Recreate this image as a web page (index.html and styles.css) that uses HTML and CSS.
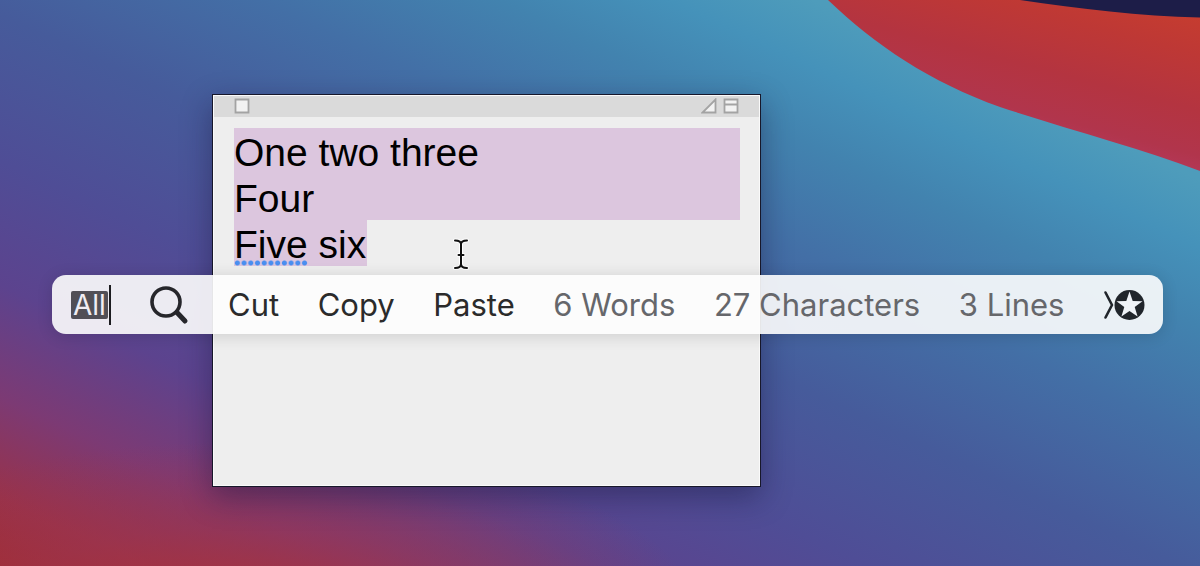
FILE: index.html
```html
<!DOCTYPE html>
<html lang="en">

<head>
    <meta charset="UTF-8">
    <meta name="viewport" content="width=device-width, initial-scale=1.0">
    <title>Note</title>

    <link rel="stylesheet" href="styles.css">
</head>

<body>
    <main class="desktop">
        <svg class="wallpaper" viewBox="0 0 1200 566" preserveAspectRatio="xMaxYMin slice" aria-hidden="true">
            <defs>
                <linearGradient id="wave" gradientUnits="userSpaceOnUse" x1="1130" y1="0" x2="1085" y2="172">
                    <stop offset="0" stop-color="#c53c30" />
                    <stop offset="0.2" stop-color="#be3835" />
                    <stop offset="0.5" stop-color="#b43440" />
                    <stop offset="0.75" stop-color="#b1354c" />
                    <stop offset="1" stop-color="#b83c68" />
                </linearGradient>
            </defs>
            <path fill="url(#wave)" d="M828 0C875 45 930 82 1000 107C1070 130 1140 148 1200 171V0Z" />
            <path fill="#1d1d48" d="M1020 0C1080 9 1140 16 1200 17.500V0Z" />
        </svg>

        <section class="note" aria-label="Sticky note">
            <header class="titlebar">
                <button class="titlebar-btn" aria-label="Close">
                    <svg width="16" height="16" viewBox="0 0 16 16"><path d="M1.500 1.500h13v13h-13z" /></svg>
                </button>
                <div class="titlebar-group">
                    <button class="titlebar-btn" aria-label="Zoom">
                        <svg width="16" height="16" viewBox="0 0 16 16"><path d="M14.500 1.500v13h-13z" /></svg>
                    </button>
                    <button class="titlebar-btn" aria-label="Collapse">
                        <svg width="16" height="16" viewBox="0 0 16 16"><path d="M1.500 1.500h13v13h-13zM1.500 6.500h13" /></svg>
                    </button>
                </div>
            </header>
            <div class="note-text" role="textbox" aria-multiline="true" aria-label="Note text" contenteditable="true" spellcheck="false">
                <div class="selected">One two three</div>
                <div class="selected">Four</div>
                <div class="selected last"><span class="misspelled">Five</span> six</div>
            </div>
        </section>

        <!-- I-beam pointer -->
        <svg class="pointer" width="18" height="34" viewBox="0 0 18 34" aria-hidden="true">
            <path class="pointer-halo" d="M3 3.500C6 3.500 9 4 9 7V27C9 30 6 31 3 31M15 3.500C12 3.500 9 4 9 7M9 27C9 30 12 31 15 31M6.500 18H11.500" />
            <path class="pointer-line" d="M3 3.500C6 3.500 9 4 9 7V27C9 30 6 31 3 31M15 3.500C12 3.500 9 4 9 7M9 27C9 30 12 31 15 31M6.500 18H11.500" />
        </svg>

        <div class="toolbar" role="toolbar" aria-label="Text actions">
            <button class="action select-all"><span class="select-all-text">All</span></button>
            <button class="action" aria-label="Search">
                <svg width="40" height="40" viewBox="0 0 40 40" fill="none" stroke="#26262b" stroke-linecap="round">
                    <circle cx="17" cy="17" r="14" stroke-width="3.600" />
                    <path d="M28 27.500L36 36" stroke-width="5" />
                </svg>
            </button>
            <button class="action">Cut</button>
            <button class="action">Copy</button>
            <button class="action">Paste</button>
            <button class="action count">6 Words</button>
            <button class="action count">27 Characters</button>
            <button class="action count">3 Lines</button>
            <button class="action" aria-label="More">
                <svg width="42" height="32" viewBox="0 0 42 32">
                    <path d="M2.500 3.500L9 16L2.500 28.500" fill="none" stroke="#20252b" stroke-width="2.600" stroke-linecap="round" stroke-linejoin="round" />
                    <circle cx="26.500" cy="16" r="15" fill="#20252b" />
                    <path fill="#eef2f7" d="M26.500 2.500L29.700 12L39.500 12.200L31.700 18.100L34.600 27.500L26.500 21.900L18.400 27.500L21.300 18.100L13.500 12.200L23.300 12Z" />
                </svg>
            </button>
        </div>
    </main>
</body>

</html>
```
FILE: styles.css
```css
body {
    margin: 0;
    font-family: "Inter", "Liberation Sans", sans-serif;
}

button {
    padding: 0;
    border: none;
    background: none;
    color: inherit;
    font: inherit;
    cursor: pointer;
}

svg {
    display: block;
}

/* Red glow in the corner over the diagonal blue to purple sweep */
.desktop {
    position: relative;
    min-height: 100vh;
    overflow: hidden;
    background:
        radial-gradient(ellipse 38% 30% at 20% 108%, rgba(168, 50, 60, 0.95), rgba(160, 52, 75, 0.5) 50%, rgba(150, 55, 100, 0) 100%),
        linear-gradient(25deg,
            #9f2c32 0%,
            #98324a 6%,
            #7c3a74 15%,
            #5c438e 25%,
            #4f4d96 36%,
            #465b9b 49%,
            #436fa6 61%,
            #4283af 71%,
            #4592ba 78%,
            #4e9cbb 84%);
}

.wallpaper {
    position: absolute;
    inset: 0;
    width: 100%;
    height: 100%;
}

/* Note window */
.note {
    position: absolute;
    top: 94px;
    left: 212px;
    width: 549px;
    height: 393px;
    box-sizing: border-box;
    border: 1px solid #17172a;
    background-color: #eeeeee;
    box-shadow: inset 0 0 0 1px #fafafa, 0 10px 28px rgba(20, 15, 50, 0.4);
}

.titlebar {
    display: flex;
    align-items: flex-start;
    justify-content: space-between;
    height: 21px;
    box-sizing: border-box;
    margin: 1px 1px 0;
    padding: 2px 20px 0;
    background-color: #dadada;
}

.titlebar-group {
    display: flex;
    gap: 6px;
}

.titlebar-btn path {
    fill: #f2f2f2;
    stroke: #a3a3a3;
    stroke-width: 1.8;
}

.note-text {
    padding: 11px 20px 11px 21px;
    font-family: "Liberation Sans", sans-serif;
    font-size: 39px;
    line-height: 43px;
    color: #000;
    outline: none;
}

.selected {
    padding-top: 3px;
    background-color: #dcc6de;
}

.selected.last {
    width: fit-content;
    padding-right: 1px;
}

.misspelled {
    display: inline-block;
    background: radial-gradient(circle, #4a8ff0 2px, transparent 3px) left bottom / 7px 6px;
    background-repeat: round no-repeat;
}

.pointer {
    position: absolute;
    top: 237px;
    left: 452px;
    fill: none;
    stroke-linecap: round;
}

.pointer-halo {
    stroke: #fff;
    stroke-width: 4;
}

.pointer-line {
    stroke: #111;
    stroke-width: 2;
}

/* Floating action bar */
.toolbar {
    position: absolute;
    top: 275px;
    left: 52px;
    right: 37px;
    display: flex;
    align-items: center;
    justify-content: space-between;
    height: 59px;
    box-sizing: border-box;
    padding: 1px 18px 0 19px;
    border-radius: 14px;
    background-color: rgba(253, 253, 253, 0.9);
    box-shadow: 0 2px 16px rgba(0, 0, 0, 0.14);
}

.action {
    font-size: 31px;
    line-height: 40px;
    color: #2b2b2b;
    white-space: nowrap;
}

.count {
    color: #66676b;
}

.select-all {
    padding-right: 1px;
    border-right: 2px solid #1c1c20;
    font-size: 28px;
}

.select-all-text {
    display: block;
    margin: 6px 0;
    padding: 0 2px;
    border-radius: 2px;
    background-color: #514f56;
    color: #f0edf3;
    line-height: 28px;
}
```
